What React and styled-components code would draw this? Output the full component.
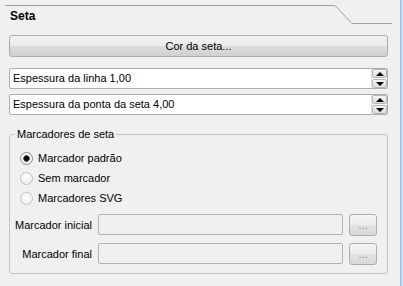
import React from 'react';
import styled, {createGlobalStyle} from 'styled-components';

const GlobalStyle = createGlobalStyle`
  html, body {
    margin: 0;
    padding: 0;
    background: #f0f0f0;
  }
  body {
    font-family: "Liberation Sans", Arial, sans-serif;
    font-size: 11px;
    color: #000;
  }
`;

const Window = styled.div`
  width: 403px;
  height: 286px;
  display: flex;
  overflow: hidden;
`;

const Panel = styled.div`
  width: 400px;
  box-sizing: border-box;
  padding: 5px 12px 0 9px;
  display: flex;
  flex-direction: column;
`;

const Edge = styled.div`
  width: 3px;
  background: linear-gradient(to right, #8fbde9 0, #8fbde9 1px, #b9d7f3 1px, #d6e7f8 100%);
`;

const Header = styled.div`
  display: flex;
  margin: 0 -4px 0 -4px;
  height: 19px;
`;

const TabLeft = styled.div`
  width: 330px;
  border-top: 1px solid #a0a0a0;
  padding: 3px 0 0 5px;
  box-sizing: border-box;
  font-weight: bold;
  font-size: 12px;
`;

const TabRight = styled.div`
  flex: 1;
  border-bottom: 1px solid #a0a0a0;
`;

const PushButton = styled.button`
  margin-top: 11px;
  height: 22px;
  width: 100%;
  border: 1px solid #acacac;
  border-radius: 3px;
  background: linear-gradient(#f2f2f2 0%, #ebebeb 48%, #dddddd 52%, #cfcfcf 100%);
  font: inherit;
  color: #000;
  padding: 0;
`;

const SpinBox = styled.div`
  margin-top: ${p => p.$top}px;
  height: 19px;
  display: flex;
  border: 1px solid #abadb3;
  border-radius: 2px;
  background: #fff;
`;

const SpinText = styled.div`
  flex: 1;
  padding-left: 3px;
  line-height: 19px;
`;

const SpinArrows = styled.div`
  width: 15px;
  display: flex;
  flex-direction: column;
  gap: 1px;
  border-left: 1px solid #e0e0e0;
`;

const Arrow = styled.div`
  flex: 1;
  display: flex;
  align-items: center;
  justify-content: center;
  background: linear-gradient(#f4f4f4, #dcdcdc);
  border: 1px solid #b5b5b5;
  border-radius: 2px;
  &::after {
    content: "";
    border-left: 4px solid transparent;
    border-right: 4px solid transparent;
    ${p => p.$down ? 'border-top: 4px solid #000;' : 'border-bottom: 4px solid #000;'}
  }
`;

const Group = styled.div`
  position: relative;
  margin-top: 19px;
  border: 1px solid #c5c5c5;
  border-radius: 3px;
  padding: 13px 10px 9px 10px;
  display: flex;
  flex-direction: column;
`;

const GroupTitle = styled.span`
  position: absolute;
  top: -8px;
  left: 5px;
  padding: 0 2px;
  background: #f0f0f0;
  line-height: 15px;
`;

const RadioRow = styled.label`
  display: flex;
  align-items: center;
  height: 20px;
  gap: 5px;
`;

const RadioDot = styled.span`
  width: 11px;
  height: 11px;
  border-radius: 50%;
  border: 1px solid ${p => p.$on ? '#8a8a8a' : '#c2c2c2'};
  background: ${p => p.$on
    ? 'radial-gradient(circle, #000 0, #111 2.2px, #5a5a5a 3px, #f4f4f4 3.6px, #fff 100%)'
    : 'radial-gradient(circle at 50% 40%, #fcfcfc, #eaeaea)'};
`;

const FormRow = styled.div`
  display: flex;
  align-items: center;
  height: 21px;
  margin-top: ${p => p.$top}px;
`;

const RowLabel = styled.div`
  width: 72px;
  flex-shrink: 0;
  display: flex;
  justify-content: flex-end;
  white-space: nowrap;
  margin-right: 6px;
`;

const PathField = styled.div`
  flex: 1;
  height: 19px;
  border: 1px solid #b2b2b2;
  border-radius: 2px;
  background: #f0f0f0;
`;

const DotsButton = styled.button`
  margin-left: 6px;
  width: 28px;
  height: 22px;
  padding: 0;
  border: 1px solid #adadad;
  border-radius: 3px;
  background: linear-gradient(#f4f4f4 0%, #ececec 48%, #e2e2e2 52%, #d9d9d9 100%);
  font: inherit;
  color: #8a8a8a;
`;

const Diagonal = () => (
  <svg width="17" height="19" viewBox="0 0 17 19" style={{display: 'block'}}>
    <line x1="0" y1="0.5" x2="17" y2="18.5" stroke="#a0a0a0" strokeWidth="1" />
  </svg>
);

export default function App() {
  return (
    <Window>
      <GlobalStyle />
      <Panel>
        <Header>
          <TabLeft>Seta</TabLeft>
          <Diagonal />
          <TabRight />
        </Header>
        <PushButton>Cor da seta...</PushButton>
        <SpinBox $top={11}>
          <SpinText>Espessura da linha 1,00</SpinText>
          <SpinArrows>
            <Arrow />
            <Arrow $down />
          </SpinArrows>
        </SpinBox>
        <SpinBox $top={5}>
          <SpinText>Espessura da ponta da seta 4,00</SpinText>
          <SpinArrows>
            <Arrow />
            <Arrow $down />
          </SpinArrows>
        </SpinBox>
        <Group>
          <GroupTitle>Marcadores de seta</GroupTitle>
          <RadioRow><RadioDot $on />Marcador padrão</RadioRow>
          <RadioRow><RadioDot />Sem marcador</RadioRow>
          <RadioRow><RadioDot />Marcadores SVG</RadioRow>
          <FormRow $top={6}>
            <RowLabel>Marcador inicial</RowLabel>
            <PathField />
            <DotsButton>...</DotsButton>
          </FormRow>
          <FormRow $top={8}>
            <RowLabel>Marcador final</RowLabel>
            <PathField />
            <DotsButton>...</DotsButton>
          </FormRow>
        </Group>
      </Panel>
      <Edge />
    </Window>
  );
}
